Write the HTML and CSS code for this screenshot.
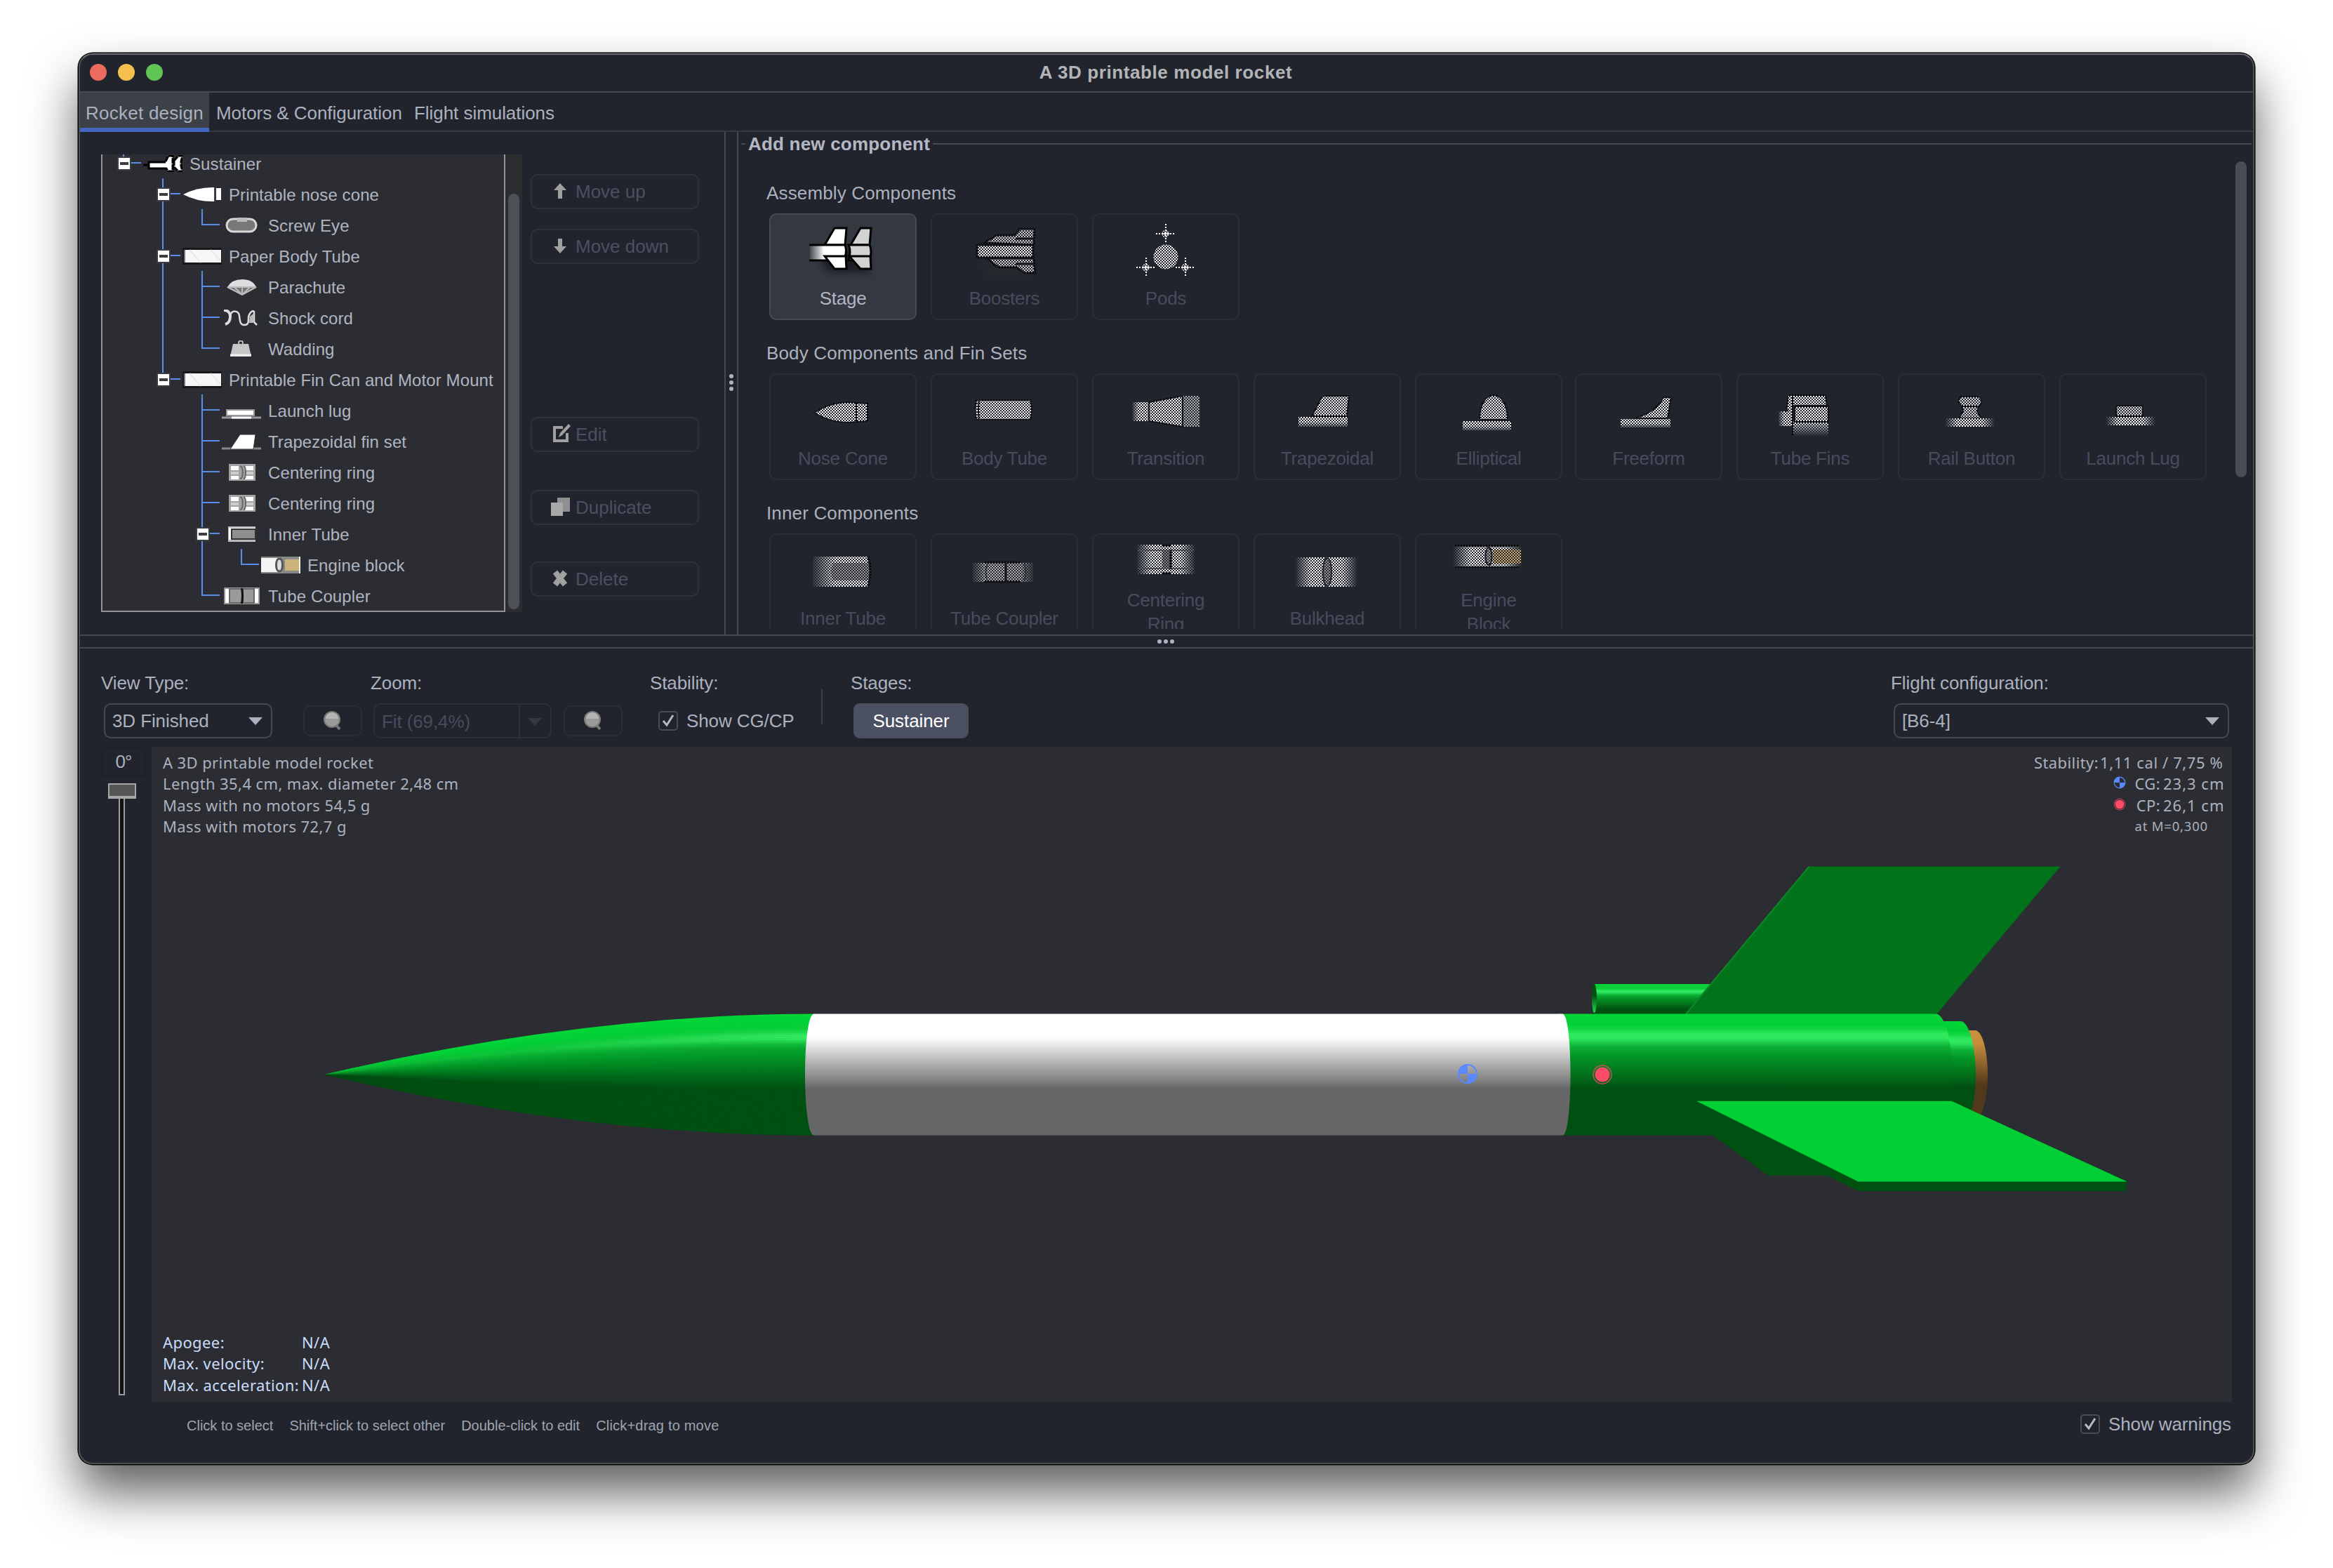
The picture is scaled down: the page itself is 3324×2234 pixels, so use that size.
FILE: index.html
```html
<!DOCTYPE html>
<html lang="en">
<head>
<meta charset="utf-8">
<title>A 3D printable model rocket</title>
<link rel="stylesheet" href="styles.css">
</head>
<body>
<svg class="defs" width="0" height="0" aria-hidden="true">
  <defs>
    <pattern id="checker" width="4" height="4" patternUnits="userSpaceOnUse">
      <rect width="2" height="2" fill="#fff"/><rect x="2" y="2" width="2" height="2" fill="#fff"/>
    </pattern>
    <mask id="dither" maskUnits="userSpaceOnUse" x="-20" y="-20" width="140" height="140"><rect x="-20" y="-20" width="140" height="140" fill="url(#checker)"/></mask>
    <linearGradient id="fadeL"><stop offset="0" stop-color="#fff" stop-opacity=".1"/><stop offset=".4" stop-color="#fff"/></linearGradient>
    <linearGradient id="fadeB"><stop offset="0" stop-color="#fff" stop-opacity="0"/><stop offset=".25" stop-color="#fff"/><stop offset=".75" stop-color="#fff"/><stop offset="1" stop-color="#fff" stop-opacity="0"/></linearGradient>
    <linearGradient id="fadeG"><stop offset="0" stop-color="#999" stop-opacity=".2"/><stop offset=".2" stop-color="#bbb"/><stop offset=".8" stop-color="#aaa"/><stop offset="1" stop-color="#999" stop-opacity=".2"/></linearGradient>
    <linearGradient id="fadeD" x2="0" y2="1"><stop offset="0" stop-color="#fff"/><stop offset="1" stop-color="#fff" stop-opacity="0"/></linearGradient>
    <linearGradient id="base" x2="0" y2="1"><stop offset="0" stop-color="#fff"/><stop offset=".5" stop-color="#fff"/><stop offset="1" stop-color="#fff" stop-opacity=".3"/></linearGradient>
    <filter id="soft" x="-50%" y="-50%" width="200%" height="200%"><feGaussianBlur stdDeviation="5"/></filter>

    <symbol id="t-cone" viewBox="0 0 56 24"><path d="M1 12Q22 1 46 2V22Q22 23 1 12Z" fill="#fff"/><path d="M46 2v20" stroke="#444" stroke-width="2"/><rect x="48" y="3" width="7" height="17" fill="#fff"/></symbol>
    <symbol id="t-tube" viewBox="0 0 56 24"><rect y="0" width="56" height="24" fill="#17181b"/><rect x="2" y="3" width="53" height="18" fill="#f6f6f6"/><path d="M10 3L26 21M40 3L54 18" stroke="#e8e8e8" stroke-width="2"/><path d="M3 3v18" stroke="#777" stroke-width="2"/></symbol>
    <symbol id="t-ring" viewBox="0 0 56 24"><rect x="10" y="0" width="38" height="24" fill="#a3a3a3"/><path d="M13 3h11v6H13zM33 3h12v6H33zM13 17h11v5H13zM33 17h12v5H33z" fill="#fff"/><path d="M13 13h11M33 13h12" stroke="#ccc" stroke-width="4"/><path d="M26 3c5 0 5 18 0 18M31 3c4 0 4 18 0 18" stroke="#666" stroke-width="2" fill="none"/></symbol>
    <symbol id="lens" viewBox="0 0 30 30"><path d="M19 20l6 7" stroke="#777" stroke-width="4"/><circle cx="14" cy="13" r="11" fill="#9a9a9a"/><circle cx="14" cy="13" r="11" fill="none" stroke="#7b7b7b" stroke-width="2"/><path d="M5 12a9 9 0 0 1 18 0Z" fill="#b4b4b4"/></symbol>
    <symbol id="check" viewBox="0 0 28 28"><path d="M7 14l5 6 9-14" fill="none" stroke="#b5bac8" stroke-width="3"/></symbol>
    <symbol id="cg" viewBox="0 0 30 30"><circle cx="15" cy="15" r="13" fill="none" stroke="#5a88ff" stroke-width="2"/><path d="M15 15V2A13 13 0 0 0 2 15zM15 15v13A13 13 0 0 0 28 15z" fill="#5a88ff"/></symbol>
    <symbol id="cp" viewBox="0 0 30 30"><circle cx="15" cy="15" r="13" fill="none" stroke="#ff4a68" stroke-opacity=".6" stroke-width="2"/><circle cx="15" cy="15" r="10.5" fill="#ff4a68"/></symbol>
  </defs>
</svg>

<main class="window">
  <header class="titlebar">
    <div class="lights"><i class="red"></i><i class="yellow"></i><i class="green"></i></div>
    <h1>A 3D printable model rocket</h1>
  </header>
  <nav class="tabs">
    <a class="tab active">Rocket design</a><a class="tab motors">Motors &amp; Configuration</a><a class="tab">Flight simulations</a>
  </nav>

  <section class="upper">
    <div class="design">
      <div class="tree">
        <div class="row"><i class="g tog up"></i><svg class="ico" viewBox="0 0 56 24"><path d="M0 14h8M8 10h30v9H8z" fill="#fff" stroke="#000" stroke-width="3"/><path d="M32 9l4-8h6v22h-6l-4-5M44 8l6-7h6l-2 8v6l2 8h-6l-6-6z" fill="#fff" stroke="#000" stroke-width="3" stroke-dasharray="8 1"/></svg><span>Sustainer</span></div>
        <div class="row"><i class="g"></i><i class="g tog up down"></i><svg class="ico"><use href="#t-cone"/></svg><span>Printable nose cone</span></div>
        <div class="row"><i class="g"></i><i class="g v"></i><i class="g leaf last"></i><svg class="ico" viewBox="0 0 56 24"><rect x="7" y="3" width="42" height="18" rx="9" fill="#787878" stroke="#d8d8d8" stroke-width="3"/><rect x="22" y="1" width="14" height="6" fill="#bbb"/></svg><span>Screw Eye</span></div>
        <div class="row"><i class="g"></i><i class="g tog up down"></i><svg class="ico"><use href="#t-tube"/></svg><span>Paper Body Tube</span></div>
        <div class="row"><i class="g"></i><i class="g v"></i><i class="g leaf"></i><svg class="ico" viewBox="0 0 56 24"><path d="M8 12Q14 1 29 1T49 12z" fill="#ddd"/><path d="M8 12l21 11 20-11zM18 12l10 10M29 12v10M40 12l-10 10" fill="#777" stroke="#bbb" stroke-width="2"/></svg><span>Parachute</span></div>
        <div class="row"><i class="g"></i><i class="g v"></i><i class="g leaf"></i><svg class="ico" viewBox="0 0 56 24"><path d="M3 1c5 0 9 3 9 9s-3 10-7 11" fill="none" stroke="#ddd" stroke-width="4"/><path d="M12 9c2-9 12-8 13 0s1 13 7 13 6-4 6-10 6-12 8-9v15l4 4" fill="none" stroke="#ddd" stroke-width="2.500"/><path d="M40 10l6-5v14h-7z" fill="#bbb"/></svg><span>Shock cord</span></div>
        <div class="row"><i class="g"></i><i class="g v"></i><i class="g leaf last"></i><svg class="ico" viewBox="0 0 56 24"><path d="M16 5h22l4 18H12z" fill="#c6c6c6"/><path d="M12 21h30" stroke="#eee" stroke-width="3"/><circle cx="27" cy="3.5" r="3" fill="none" stroke="#bbb" stroke-width="2"/></svg><span>Wadding</span></div>
        <div class="row"><i class="g"></i><i class="g tog up"></i><svg class="ico"><use href="#t-tube"/></svg><span>Printable Fin Can and Motor Mount</span></div>
        <div class="row"><i class="g"></i><i class="g"></i><i class="g leaf"></i><svg class="ico" viewBox="0 0 56 24"><path d="M0 22h56" stroke="#999" stroke-width="3"/><path d="M14 22h28" stroke="#fff" stroke-width="3"/><rect x="7" y="11" width="39" height="8" fill="#fff" stroke="#999" stroke-width="2"/></svg><span>Launch lug</span></div>
        <div class="row"><i class="g"></i><i class="g"></i><i class="g leaf"></i><svg class="ico" viewBox="0 0 56 24"><path d="M0 22h56" stroke="#888" stroke-width="3"/><path d="M26 2h22l-3 21H12z" fill="#fff" stroke="#333" stroke-width="1"/></svg><span>Trapezoidal fin set</span></div>
        <div class="row"><i class="g"></i><i class="g"></i><i class="g leaf"></i><svg class="ico"><use href="#t-ring"/></svg><span>Centering ring</span></div>
        <div class="row"><i class="g"></i><i class="g"></i><i class="g leaf"></i><svg class="ico"><use href="#t-ring"/></svg><span>Centering ring</span></div>
        <div class="row"><i class="g"></i><i class="g"></i><i class="g tog up down"></i><svg class="ico" viewBox="0 0 56 24"><rect x="9" y="1" width="39" height="22" fill="#bbb"/><rect x="10" y="3" width="38" height="17" fill="#fff"/><rect x="14" y="5" width="34" height="14" fill="#8f8f8f" stroke="#333" stroke-width="2"/></svg><span>Inner Tube</span></div>
        <div class="row"><i class="g"></i><i class="g"></i><i class="g v"></i><i class="g leaf last"></i><svg class="ico" viewBox="0 0 56 24"><rect y="0" width="56" height="24" fill="#888"/><rect y="2" width="24" height="20" fill="#f4f4f4"/><rect x="34" y="4" width="22" height="16" fill="#cbb37c"/><path d="M26 3c-6 0-6 18 0 18s6-18 0-18" fill="#ddd" stroke="#555" stroke-width="3"/><path d="M55 0v24" stroke="#eee" stroke-width="2"/></svg><span>Engine block</span></div>
        <div class="row"><i class="g"></i><i class="g"></i><i class="g leaf last"></i><svg class="ico" viewBox="0 0 56 24"><rect x="3" y="0" width="51" height="24" fill="#999"/><rect x="5" y="2" width="47" height="20" fill="#fff"/><rect x="11" y="2" width="18" height="20" fill="#9a9a9a" stroke="#666" stroke-width="2"/><rect x="30" y="2" width="16" height="20" fill="#9a9a9a" stroke="#666" stroke-width="2"/><path d="M28.500 1q2 11 0 22" stroke="#111" stroke-width="3" fill="none"/></svg><span>Tube Coupler</span></div>
      </div>
      <div class="tree-scroll"><i></i></div>
      <div class="actions">
        <button class="btn"><svg viewBox="0 0 30 30"><path d="M15 4l9 10h-6v12h-6V14H6z" fill="#a0a0a0"/></svg>Move up</button>
        <button class="btn"><svg viewBox="0 0 30 30"><path d="M15 26l9-10h-6V5h-6v11H6z" fill="#a0a0a0"/></svg>Move down</button>
        <button class="btn edit"><svg viewBox="0 0 30 30"><path d="M19 6H7v19h18V14" fill="none" stroke="#a0a0a0" stroke-width="4"/><path d="M13 20l2-6L27 1l3 3-12 13z" fill="#a0a0a0"/></svg>Edit</button>
        <button class="btn dup"><svg viewBox="0 0 30 30"><path d="M11 2h18v20H11z" fill="#909090"/><path d="M2 9h17v19H2z" fill="#a8a8a8"/></svg>Duplicate</button>
        <button class="btn del"><svg viewBox="0 0 30 30"><path d="M8 6l14 18M22 6L8 24" stroke="#a0a0a0" stroke-width="8"/></svg>Delete</button>
      </div>
    </div>
    <div class="vsplit"><i></i><i></i><i></i></div>
    <div class="components">
      <div class="legend"><b>Add new component</b></div>
      <div class="comp-body">
        <div class="groups">
          <h2>Assembly Components</h2>
          <div class="tiles">
            <div class="tile on"><svg viewBox="0 0 96 96"><path d="M10 50h76v30H26z" fill="#000" opacity=".45" filter="url(#soft)"/><g stroke="#000" stroke-width="3"><path d="M22 41L36 17H53L51 41z" fill="#fff"/><path d="M59 41L73 17H88L86 41z" fill="#d2d2d2"/><rect x="1" y="41" width="50" height="22" fill="url(#fadeL)" stroke="none"/><path d="M0 41H51Q54 50 51 57M0 63H26" fill="none"/><path d="M56 41H86Q90 50 86 63H56Q60 50 56 41z" fill="#d2d2d2"/><path d="M22 57H52L53 75H36z" fill="#fff"/><path d="M57 57H87L88 75H73z" fill="#d2d2d2"/></g></svg>Stage</div>
            <div class="tile"><svg viewBox="0 0 96 96"><g mask="url(#dither)"><path d="M10 60h80v30H24z" fill="#333" opacity=".6" filter="url(#soft)"/><g stroke="#000" stroke-width="3"><path d="M19 38L37 27H62L70 18H91L90 41z" fill="#ccc"/><path d="M22 60L40 73H66L76 81H92L90 60z" fill="#ccc"/><rect x="9" y="41" width="80" height="18" fill="#fff"/><path d="M64 32h26M64 68h26" fill="none"/></g></g></svg>Boosters</div>
            <div class="tile"><svg viewBox="0 0 96 96"><g mask="url(#dither)"><circle cx="48" cy="58" r="16.500" fill="#eee" stroke="#fff" stroke-width="2"/><g fill="#ccc"><circle cx="48" cy="25" r="5.500"/><circle cx="20" cy="73" r="5.500"/><circle cx="76" cy="73" r="5.500"/></g></g><path d="M34 25h28M48 11v28M6 73h28M20 59v28M62 73h28M76 59v28" stroke="#fff" stroke-width="2" stroke-dasharray="2 2"/></svg>Pods</div>
          </div>
          <h2>Body Components and Fin Sets</h2>
          <div class="tiles">
            <div class="tile"><svg viewBox="0 0 96 96"><g mask="url(#dither)" stroke="#000" stroke-width="2"><path d="M7 52Q30 37 57 37L83 39V64L57 66Q30 66 7 52z" fill="#fff"/><path d="M67 38v27"/></g></svg>Nose Cone</div>
            <div class="tile"><svg viewBox="0 0 96 96"><g mask="url(#dither)" stroke="#000" stroke-width="2"><path d="M8 34H85Q89 48 85 62H8Q5 48 8 34z" fill="#f4f4f4"/><path d="M12 35q-2 13 0 26" fill="none"/></g></svg>Body Tube</div>
            <div class="tile"><svg viewBox="0 0 96 96"><g mask="url(#dither)" stroke="#000" stroke-width="2"><rect x="0" y="37" width="24" height="27" fill="url(#fadeL)" stroke="none"/><rect x="72" y="28" width="24" height="44" fill="#ddd" opacity=".75" stroke="none"/><path d="M24 37L72 28V72L24 64z" fill="#fff"/></g></svg>Transition</div>
            <div class="tile"><svg viewBox="0 0 96 96"><g mask="url(#dither)" stroke="#000" stroke-width="2"><path d="M41 28H79L76 57H26z" fill="#f4f4f4"/><rect x="7" y="58" width="70" height="14" fill="url(#base)" stroke="none"/></g></svg>Trapezoidal</div>
            <div class="tile"><svg viewBox="0 0 96 96"><g mask="url(#dither)" stroke="#000" stroke-width="2"><path d="M35 62C35 40 44 27 55 27S75 40 75 62z" fill="#f4f4f4"/><rect x="11" y="64" width="69" height="13" fill="url(#base)" stroke="none"/></g></svg>Elliptical</div>
            <div class="tile"><svg viewBox="0 0 96 96"><g mask="url(#dither)" stroke="#000" stroke-width="2"><path d="M27 60Q58 52 69 30H80L75 60z" fill="#fff"/><rect x="8" y="61" width="71" height="12" fill="url(#base)" stroke="none"/></g></svg>Freeform</div>
            <div class="tile"><svg viewBox="0 0 96 96"><g mask="url(#dither)" stroke="#000" stroke-width="2"><rect x="3" y="50" width="20" height="21" fill="url(#fadeL)" stroke="none"/><rect x="22" y="65" width="52" height="21" fill="url(#fadeD)" stroke="none"/><path d="M17 27H70L72 42H24L14 50z" fill="#f4f4f4"/><rect x="26" y="43" width="48" height="22" fill="#fff"/><rect x="17" y="28" width="7" height="40" fill="#fff" stroke="none"/><path d="M23 28v58" fill="none"/></g></svg>Tube Fins</div>
            <div class="tile"><svg viewBox="0 0 96 96"><g mask="url(#dither)" stroke="#000" stroke-width="2"><path d="M32 29H59Q66 37 58 43L56 50L62 60H30L36 50L34 43Q26 37 32 29z" fill="#ddd"/><path d="M33 43h26"/><rect x="10" y="60" width="71" height="12" fill="url(#fadeB)" stroke="none"/></g></svg>Rail Button</div>
            <div class="tile"><svg viewBox="0 0 96 96"><g mask="url(#dither)" stroke="#000" stroke-width="2"><rect x="24" y="42" width="38" height="15" rx="2" fill="#ddd"/><rect x="9" y="58" width="71" height="12" fill="url(#fadeB)" stroke="none"/></g></svg>Launch Lug</div>
          </div>
          <h2>Inner Components</h2>
          <div class="tiles">
            <div class="tile"><svg viewBox="0 0 96 96"><g mask="url(#dither)"><path d="M5 29H84Q90 50 84 72H5z" fill="url(#fadeL)"/><path d="M34 38H87V63H34Q28 50 34 38z" fill="#999"/><path d="M84 29Q90 50 84 72" stroke="#000" stroke-width="3" fill="none"/></g></svg>Inner Tube</div>
            <div class="tile"><svg viewBox="0 0 96 96"><g mask="url(#dither)"><rect x="3" y="38" width="86" height="27" fill="url(#fadeG)"/><path d="M20 37h50M20 65h50M50 38v27" stroke="#000" stroke-width="3" fill="none"/><path d="M24 39q-5 12 0 25M76 39q5 12 0 25" stroke="#444" stroke-width="2" fill="none"/></g></svg>Tube Coupler</div>
            <div class="tile two"><svg viewBox="0 0 96 96"><g mask="url(#dither)"><rect x="6" y="32" width="84" height="42" fill="url(#fadeB)"/><path d="M8 40h80M8 66h80" stroke="#777" stroke-width="2"/><rect x="43" y="39" width="12" height="28" fill="#888"/><path d="M55 39v28M42 33h14M42 73h14" stroke="#000" stroke-width="3"/></g></svg>Centering<br>Ring</div>
            <div class="tile"><svg viewBox="0 0 96 96"><g mask="url(#dither)"><rect x="2" y="30" width="89" height="42" fill="url(#fadeB)"/><path d="M48 31c-8 0-8 40 0 40s8-40 0-40" fill="#999" stroke="#222" stroke-width="2"/></g></svg>Bulkhead</div>
            <div class="tile two"><svg viewBox="0 0 96 96"><g mask="url(#dither)"><rect x="-3" y="35" width="99" height="28" fill="url(#fadeB)"/><rect x="54" y="39" width="40" height="20" fill="#d0b070"/><path d="M0 33h92M0 64h92" stroke="#000" stroke-width="2"/><path d="M48 36c-6 0-6 25 0 25s6-25 0-25" fill="#aaa" stroke="#111" stroke-width="2"/></g></svg>Engine<br>Block</div>
          </div>
        </div>
        <div class="comp-scroll"><i></i></div>
      </div>
    </div>
  </section>

  <div class="hsplit"><i></i><i></i><i></i></div>

  <section class="lower">
    <div class="toolbar">
      <div class="field view"><label>View Type:</label><div class="ctl"><div class="combo">3D Finished<i class="arrow"></i></div></div></div>
      <div class="field zoom"><label>Zoom:</label><div class="ctl"><div class="lens"><svg><use href="#lens"/></svg></div><div class="combo dim">Fit (69,4%)<i class="arrow"></i></div><div class="lens"><svg><use href="#lens"/></svg></div></div></div>
      <div class="field stab"><label>Stability:</label><div class="ctl"><span class="box"><svg><use href="#check"/></svg></span>Show CG/CP</div></div>
      <div class="rule"></div>
      <div class="field stages"><label>Stages:</label><div class="ctl"><div class="stage">Sustainer</div></div></div>
      <div class="field flight"><label>Flight configuration:</label><div class="ctl"><div class="combo">[B6-4]<i class="arrow"></i></div></div></div>
    </div>

    <div class="stagearea">
      <div class="angle"><div class="deg">0°</div><div class="slider"><div class="thumb"></div><div class="track"></div></div></div>
      <div class="view3d">
        <svg class="rocket" viewBox="216 1064 2964 934">
          <defs>
            <linearGradient id="gr" x2="0" y2="1"><stop offset="0" stop-color="#02d638"/><stop offset=".09" stop-color="#04cf36"/><stop offset=".13" stop-color="#14d944"/><stop offset=".165" stop-color="#2fea60"/><stop offset=".205" stop-color="#2fe65d"/><stop offset=".27" stop-color="#0cb136"/><stop offset=".35" stop-color="#029526"/><stop offset=".5" stop-color="#02701a"/><stop offset=".62" stop-color="#005012"/></linearGradient>
            <linearGradient id="wh" x2="0" y2="1"><stop offset=".19" stop-color="#fff"/><stop offset=".27" stop-color="#e2e2e2"/><stop offset=".4" stop-color="#b4b4b4"/><stop offset=".5" stop-color="#929292"/><stop offset=".62" stop-color="#666"/></linearGradient>
            <linearGradient id="co" x2="0" y2="1"><stop offset="0" stop-color="#ca903f"/><stop offset=".15" stop-color="#c58c3c"/><stop offset=".62" stop-color="#52391a"/></linearGradient>
            <linearGradient id="lugIn" x2="0" y2="1"><stop offset=".4" stop-color="#005012"/><stop offset="1" stop-color="#1fe050"/></linearGradient>
            <linearGradient id="shine" gradientUnits="userSpaceOnUse" x1="464" x2="1160" y1="0" y2="0"><stop offset="0" stop-color="#48ff78" stop-opacity="0"/><stop offset=".4" stop-color="#48ff78" stop-opacity=".12"/><stop offset="1" stop-color="#48ff78" stop-opacity=".75"/></linearGradient>
          </defs>
          <path d="M2272 1402H2460V1460H2272Z" fill="url(#gr)"/>
          <ellipse cx="2271.500" cy="1422.500" rx="3.500" ry="20.500" fill="url(#lugIn)"/>
          <path d="M2577.700 1234.400H2935.600L2758.400 1446H2401Z" fill="#00731b"/>
          <path d="M2577.700 1234.400L2401 1446" stroke="#098a25" stroke-width="2"/>
          <path d="M2800 1468H2814C2825 1468 2832 1500 2832 1531S2825 1594 2814 1594H2800Z" fill="url(#co)"/>
          <path d="M2740 1455H2793.600C2806 1455 2815 1495 2815 1531S2806 1607 2793.600 1607H2740Z" fill="url(#gr)"/>
          <path d="M2220 1444.500H2758.400C2772 1444.500 2782 1490 2782 1531S2772 1617.500 2758.400 1617.500H2220Z" fill="url(#gr)"/>
          <path d="M2440 1616L2519 1674.600H2603L2647.500 1696.600L2680 1640L2600 1600Z" fill="#005012"/>
          <path d="M2417 1568.800L2440 1617.500L2519 1674.600H2603L2647.500 1697H3028.300L3030.700 1683L2780 1568.800Z" fill="#005012"/>
          <path d="M2417 1568.800H2780.700L3030.700 1683.500H2647.500Z" fill="#02cf35"/>
          <g id="nose"></g>
          <path d="M1159.700 1444.500H2226.300C2234 1444.500 2237.500 1490 2237.500 1531S2234 1617.500 2226.300 1617.500H1159.700C1151 1617.500 1147 1572 1147 1531S1151 1444.500 1159.700 1444.500Z" fill="url(#wh)"/>
          <use href="#cg" x="2076" y="1515" width="30" height="30"/>
          <use href="#cp" x="2268" y="1516" width="30" height="30"/>
        </svg>
        <div class="info">A 3D printable model rocket<br>Length 35,4 cm, max. diameter 2,48 cm<br>Mass with no motors 54,5 g<br>Mass with motors 72,7 g</div>
        <div class="stability">
          <div><span>Stability:</span><span class="v1">1,11 cal / 7,75 %</span></div>
          <div><svg><use href="#cg"/></svg><span class="k">CG:</span><span class="v2">23,3 cm</span></div>
          <div><svg><use href="#cp"/></svg><span class="k">CP:</span><span class="v2">26,1 cm</span></div>
          <div class="mach">at M=0,300</div>
        </div>
        <div class="flightdata"><span>Apogee:</span><span>N/A</span><span>Max. velocity:</span><span>N/A</span><span>Max. acceleration:</span><span>N/A</span></div>
      </div>
    </div>

    <footer class="foot">
      <div class="hints"><span>Click to select</span><span>Shift+click to select other</span><span>Double-click to edit</span><span>Click+drag to move</span></div>
      <div class="warn"><span class="box"><svg><use href="#check"/></svg></span>Show warnings</div>
    </footer>
  </section>
</main>
<script src="nose.js"></script>
</body>
</html>
```
FILE: nose.js
```js
// Shades the nose cone as nested ogive bands, lit from above.
(function () {
  var g = document.getElementById('nose'), NS = 'http://www.w3.org/2000/svg';
  var mid = 1531, R = 86.5, tip = 462, end = 1161;
  var stops = [[0, 2, 214, 56], [0.1, 3, 206, 53], [0.2, 10, 184, 50], [0.28, 6, 166, 46], [0.35, 2, 149, 38], [0.5, 1, 110, 26], [0.62, 0, 80, 18], [1, 0, 80, 18]];
  function color(t) {
    for (var i = 1; i < stops.length; i++) {
      if (t <= stops[i][0]) {
        var a = stops[i - 1], b = stops[i], f = (t - a[0]) / (b[0] - a[0]);
        return 'rgb(' + [1, 2, 3].map(function (k) { return Math.round(a[k] + (b[k] - a[k]) * f); }).join() + ')';
      }
    }
  }
  function band(k0, k1, fill, op) {
    var p = document.createElementNS(NS, 'path');
    var y0 = mid - k0 * R, y1 = mid - k1 * R;
    p.setAttribute('d', 'M' + tip + ' ' + mid + 'Q832 ' + y0 + ' ' + end + ' ' + y0 + 'V' + y1 + 'Q832 ' + y1 + ' ' + tip + ' ' + mid + 'Z');
    p.setAttribute('fill', fill);
    if (op !== undefined) p.setAttribute('opacity', op);
    g.appendChild(p);
  }
  var N = 110, i, t;
  for (i = 0; i < N; i++) {
    t = i / N;
    band(1 - 2 * t, Math.max(-1, 1 - 2 * (t + 2 / N)), color(t));
  }
  for (i = 0; i < N; i++) {
    t = (i + 0.5) / N;
    var w = Math.exp(-Math.pow((t - 0.19) / 0.05, 2));
    if (w > 0.02) band(1 - 2 * i / N, 1 - 2 * (i + 1) / N, 'url(#shine)', w.toFixed(3));
  }
})();
```
FILE: styles.css
```css
* { box-sizing: border-box; }
body {
  margin: 0; width: 3324px; height: 2234px; padding: 76px 112px 148px;
  background: #fff; overflow: hidden;
  font: 26px/34px "Liberation Sans", Arial, sans-serif; color: #abb1bf;
}
.defs { position: absolute; }
i { font-style: normal; }
svg { display: block; flex: none; }
h1, h2 { margin: 0; font-size: 26px; }

.window {
  position: relative; width: 3100px; height: 2010px; border-radius: 20px;
  background: #21242c; overflow: hidden; display: flex; flex-direction: column;
}
.window::after {
  content: ""; position: absolute; inset: 0; border-radius: 20px;
  border: 2px solid #4a4e53; border-top-color: #6b6e71;
}
body::before {
  content: ""; position: absolute; left: 112px; top: 76px; width: 3100px; height: 2010px; border-radius: 20px;
  box-shadow: 0 0 0 1.5px #000, 0 40px 70px rgba(0, 0, 0, .63);
}

.titlebar { height: 56px; border-bottom: 2px solid #454950; display: flex; align-items: center; flex: none; }
.lights { display: flex; gap: 16px; padding-left: 16px; width: 136px; }
.lights i { width: 24px; height: 24px; border-radius: 50%; }
.red { background: #ed6a5e; } .yellow { background: #f5bf4f; } .green { background: #61c554; }
.titlebar h1 { flex: 1; text-align: center; padding-right: 138px; letter-spacing: .6px; color: #b3b4b8; }

.tabs { height: 56px; border-bottom: 2px solid #363a42; display: flex; flex: none; }
.tab { height: 56px; padding: 0 10px; line-height: 58px; letter-spacing: -.05px; }
.tab.active { width: 186px; background: #3c4047; border-bottom: 6px solid #4368bd; letter-spacing: .25px; white-space: nowrap; }
.tab.motors { width: 282px; white-space: nowrap; }

.upper { height: 716px; display: flex; flex: none; }
.design { width: 920px; padding: 32px 0 0 32px; display: flex; align-items: flex-start; }
.tree {
  width: 576px; height: 652px; overflow: hidden; background: #2c2d32; border: 2px solid #939496; border-top: 0;
  padding-left: 2px; font-size: 24px; letter-spacing: .1px; color: #b0b5c2;
}
.row { height: 44px; display: flex; align-items: center; }
.row:first-child { margin-top: -8px; }
.row span { padding-left: 10px; white-space: nowrap; }
.ico { width: 56px; height: 24px; margin-top: -2px; }
.g { width: 56px; height: 44px; position: relative; flex: none; }
.v::before, .leaf::before { content: ""; position: absolute; left: 27px; top: -2px; width: 2px; height: 46px; background: #5a8cf0; }
.leaf::after { content: ""; position: absolute; left: 27px; top: 19px; width: 26px; height: 2px; background: #5a8cf0; }
.leaf.last::before { height: 23px; }
.tog {
  background:
    linear-gradient(#3b3c3f, #3b3c3f) 23px 19px / 12px 4px no-repeat,
    linear-gradient(#fff, #fff) 21px 13px / 16px 16px no-repeat,
    linear-gradient(#3b3c3f, #3b3c3f) 19px 11px / 20px 20px no-repeat,
    linear-gradient(#5a8cf0, #5a8cf0) 39px 19px / 14px 2px no-repeat;
}
.tog::before { content: ""; position: absolute; left: 27px; top: -2px; width: 2px; height: 13px; background: #5a8cf0; }
.tog.down::after { content: ""; position: absolute; left: 27px; top: 31px; width: 2px; height: 13px; background: #5a8cf0; }
.tree-scroll { width: 24px; height: 652px; background: #2c2d31; padding: 56px 4px 4px; }
.tree-scroll i { display: block; height: 592px; border-radius: 8px; background: #4d5056; }
.actions { padding: 28px 0 0 12px; width: 252px; }
.btn {
  display: flex; align-items: center; width: 240px; height: 50px; margin: 0 0 28px; padding: 0 0 0 25px;
  border: 2px solid #2e3139; border-radius: 10px; background: none; font: inherit; color: #4a5062; gap: 7px;
}
.btn svg { width: 30px; height: 30px; margin-top: -2px; }
.btn.edit { margin: 218px 0 54px; }
.btn.dup { margin-bottom: 52px; }

.vsplit { width: 20px; border: solid #454950; border-width: 0 2px; display: flex; flex-direction: column; align-items: center; gap: 3px; padding-top: 345px; }
.vsplit i, .hsplit i { width: 6px; height: 6px; border-radius: 50%; background: #abb1bf; }
.hsplit { height: 20px; border: solid #454950; border-width: 2px 0; display: flex; justify-content: center; align-items: center; gap: 3px; flex: none; padding-right: 3px; }

.components { width: 2160px; padding: 0 4px; }
.legend { height: 34px; display: flex; align-items: center; gap: 4px; letter-spacing: .2px; color: #b3b8c4; }
.legend::before { content: ""; width: 6px; height: 2px; background: #454950; }
.legend::after { content: ""; flex: 1; height: 2px; background: #454950; }
.comp-body { height: 674px; display: flex; }
.groups { width: 2128px; height: 674px; overflow: hidden; padding: 36px 0 0 36px; }
.groups h2 { font-weight: normal; letter-spacing: .15px; line-height: 34px; height: 34px; margin: 0 0 12px; }
.tiles { display: flex; gap: 20px; margin: 0 0 30px 4px; }
.tile {
  width: 210px; height: 152px; border: 2px solid #2b2e36; border-radius: 10px; padding-top: 2px;
  display: flex; flex-direction: column; align-items: center; text-align: center; color: #464c5e; letter-spacing: -.25px;
}
.tile:nth-child(6) { margin-left: -2px; }
.tile svg { width: 96px; height: 96px; margin-bottom: 4px; overflow: visible; }
.tile.two svg { margin: -20px 0 -2px; }
.tile.on { background: #343841; border-color: #454b54; color: #b0b5c2; }
.comp-scroll { padding: 8px 0 0 1px; }
.comp-scroll i { display: block; width: 16px; height: 450px; border-radius: 8px; background: #4a4d53; }

.lower { flex: 1; }
.toolbar { height: 140px; display: flex; padding: 32px 0 0 32px; letter-spacing: -.1px; }
.field { flex: none; }
.field label { display: block; height: 34px; }
.ctl { display: flex; align-items: center; height: 50px; margin-top: 12px; white-space: nowrap; }
.view { width: 384px; } .zoom { width: 398px; } .stab { width: 243px; } .stages { width: 1482px; }
.combo {
  width: 240px; height: 50px; border: 2px solid #444a54; border-radius: 10px; padding: 0 12px 0 10px;
  display: flex; align-items: center; justify-content: space-between;
}
.view .combo { margin-left: 4px; }
.arrow { border: 10px solid transparent; border-top: 11px solid #abb1bf; border-bottom: 0; }
.zoom .ctl { margin-left: -96px; }
.lens { width: 84px; height: 44px; border: 2px solid #2b2e36; border-radius: 10px; display: flex; align-items: center; justify-content: center; }
.lens svg { width: 30px; height: 30px; }
.combo.dim {
  width: 254px; margin: 0 17px 0 16px; padding-top: 2px; border-color: #2d3038; color: #464c5e; letter-spacing: -.1px;
  background: linear-gradient(#2d3038, #2d3038) 205px 0 / 2px 100% no-repeat;
}
.combo.dim .arrow { border-top-color: #33373f; }
.box { width: 28px; height: 28px; border: 2px solid #464c58; border-radius: 5px; margin-right: 12px; display: flex; align-items: center; justify-content: center; }
.box svg { width: 28px; height: 28px; }
.stab .box { margin-left: 12px; }
.rule { width: 2px; height: 50px; background: #3b3f48; margin: 26px 40px 0 1px; }
.stage { width: 164px; height: 50px; margin-left: 4px; border-radius: 9px; background: #4b5163; border: 2px solid #4a4f5c; color: #fff; display: flex; align-items: center; justify-content: center; }
.flight .combo { width: 478px; margin-left: 4px; }

.stagearea { height: 934px; display: flex; padding-left: 32px; }
.angle { width: 72px; }
.deg { width: 64px; height: 42px; border: 2px solid #1f2127; text-align: center; line-height: 38px; letter-spacing: -1px; }
.slider { margin-top: 10px; display: flex; flex-direction: column; align-items: center; width: 59px; }
.thumb { width: 40px; height: 22px; border: 2px solid #a7a7a7; border-bottom-width: 4px; background: #555; }
.track { width: 9px; height: 850px; border: 2px solid #9c9c9c; border-top: 0; background: #111; }
.view3d { position: relative; width: 2964px; height: 934px; background: #2c2d32; display: flex; justify-content: space-between; font: 22px/30.400px "Noto Sans", sans-serif; letter-spacing: .4px; color: #abb1bf; }
.rocket { position: absolute; left: 0; top: 0; width: 2964px; height: 934px; }
.info { position: relative; padding: 7px 0 0 16px; white-space: nowrap; }
.stability { position: relative; padding: 7px 12px 0 0; }
.stability div { display: flex; justify-content: flex-end; align-items: center; }
.stability svg { width: 18px; height: 18px; margin: -3px 7px 0 0; }
.stability .k { width: 42px; text-align: right; }
.v1 { width: 176px; margin-left: 2px; white-space: nowrap; letter-spacing: .6px; }
.v2 { width: 86px; margin-left: 4px; white-space: nowrap; letter-spacing: 1px; }
.stability .mach { font-size: 18.500px; padding-right: 22px; letter-spacing: .8px; }
.flightdata {
  position: absolute; left: 16px; bottom: 10px; display: grid; grid-template-columns: 198px auto; color: #c9dcfb; white-space: nowrap;
}

.foot { height: 88px; display: flex; justify-content: space-between; padding: 14px 33px 0 154px; }
.hints { display: flex; gap: 23px; font-size: 20px; line-height: 38px; color: #9ea4b1; }
.hints span:last-child { letter-spacing: .2px; }
.warn { display: flex; height: 34px; align-items: center; letter-spacing: -.1px; }
```
